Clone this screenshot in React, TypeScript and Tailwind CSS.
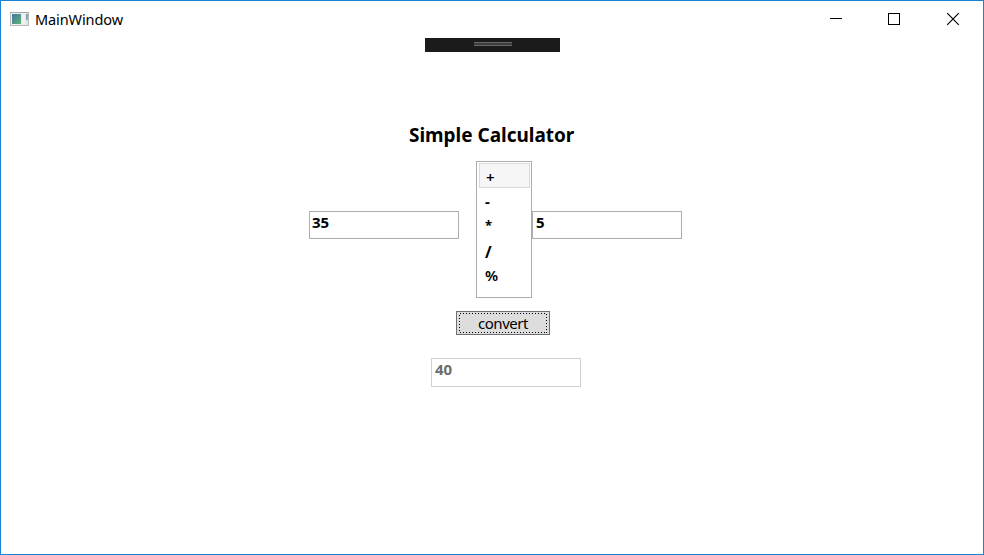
import type { ReactNode } from "react";

const operators = [
  { symbol: "-", row: "h-[26px] pl-[7px] leading-[27px] text-[15px]" },
  { symbol: "*", row: "h-[24px] pl-[7px] leading-[22px] text-[13px]" },
  { symbol: "/", row: "h-[26px] pl-[7px] leading-[28px] text-[16px]" },
  { symbol: "%", row: "h-[24px] pl-[7px] leading-[23px] text-[15px] font-semibold" },
];

function AppIcon() {
  return (
    <svg width="20" height="16" viewBox="0 0 20 16" aria-hidden="true">
      <defs>
        <linearGradient id="pane" x1="0" y1="0" x2="1" y2="1">
          <stop offset="0" stopColor="#4775a0" />
          <stop offset="1" stopColor="#5bb576" />
        </linearGradient>
        <linearGradient id="face" x1="0" y1="0" x2="1" y2="0">
          <stop offset="0" stopColor="#f4f4f4" />
          <stop offset="1" stopColor="#e2e4e5" />
        </linearGradient>
      </defs>
      <rect x="0.5" y="2.5" width="18" height="13" fill="url(#face)" stroke="#b8babc" />
      <path d="M0 2.5H19" stroke="#a4a7aa" />
      <rect x="2" y="4" width="9" height="10" fill="url(#pane)" />
      <rect x="12" y="4" width="3" height="10" fill="#f2f2f2" />
      <rect x="16" y="4" width="2" height="6" fill="url(#pane)" opacity="0.7" />
    </svg>
  );
}

function Field({ children, className }: { children: ReactNode; className: string }) {
  return (
    <div className={`w-[150px] border bg-white text-[15px] leading-[20px] font-bold tracking-[-0.1px] ${className}`}>
      {children}
    </div>
  );
}

export default function App() {
  return (
    <div className="flex h-[555px] w-[984px] flex-col border border-[#1883d7] bg-white font-['Noto_Sans','Open_Sans',sans-serif] text-black">
      <header className="flex h-[37px] shrink-0 items-start justify-between">
        <div className="flex pl-[9px]">
          <div className="pt-[9px]"><AppIcon /></div>
          <span className="pt-[8px] pl-[5px] text-[14.5px] leading-[20px] tracking-[-0.1px]">MainWindow</span>
        </div>
        <svg width="174" height="36" viewBox="0 0 174 36" fill="none" stroke="black" shapeRendering="crispEdges" aria-hidden="true">
          <path d="M21 17.5H33" />
          <rect x="79.5" y="12.5" width="11" height="11" />
          <path d="M138.2 12.2L149.8 23.8M149.8 12.2L138.2 23.8" strokeWidth="1.2" shapeRendering="auto" />
        </svg>
      </header>
      <main className="flex flex-col items-start">
        <div className="ml-[424px] flex h-[14px] w-[135px] justify-center bg-[#1b1b1b] pt-[4px]">
          <div className="h-[4px] w-[38px] border-y border-[#686868] bg-[#3d3d3d]" />
        </div>
        <h1 className="mt-[69px] ml-[408px] h-[28px] text-[19px] leading-[28px] font-bold tracking-[-0.02px] whitespace-nowrap">Simple Calculator</h1>
        <div className="mt-[12px] ml-[308px] flex items-start">
          <Field className="mt-[50px] h-[28px] border-[#abadb3] pl-[2px]">35</Field>
          <div className="ml-[17px] h-[137px] w-[56px] border border-[#abadb3] p-px font-bold">
            <div className="ml-px h-[25px] w-[51px] border border-[#dadada] bg-[#f6f6f6] pl-[6px] text-[15px] leading-[26px] font-semibold">+</div>
            {operators.map(({ symbol, row }) => (
              <div key={symbol} className={row}>{symbol}</div>
            ))}
          </div>
          <Field className="mt-[50px] h-[28px] border-[#abadb3] pl-[3px]">5</Field>
        </div>
        <button className="relative mt-[13px] ml-[455px] flex h-[24px] w-[94px] items-center justify-center border border-[#707070] bg-[#dddddd]">
          <svg className="absolute top-px left-[2px]" width="88" height="20" viewBox="0 0 88 20" fill="none" shapeRendering="crispEdges" aria-hidden="true">
            <rect x="0.5" y="0.5" width="87" height="19" stroke="black" strokeDasharray="1 2" />
          </svg>
          <span className="text-[15px] leading-[20px] tracking-[-0.45px]">convert</span>
        </button>
        <Field className="mt-[23px] ml-[430px] h-[29px] border-[#ced0d4] pl-[3px] text-[#6d6d6d]">40</Field>
      </main>
    </div>
  );
}
